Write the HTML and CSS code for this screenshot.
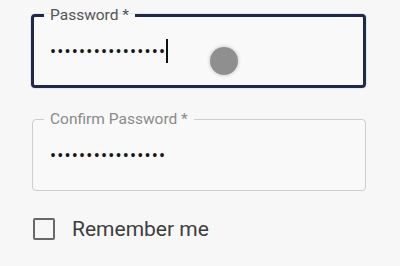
FILE: index.html
```html
<!DOCTYPE html>
<html>
<head>
<meta name="viewport" content="width=device-width, initial-scale=1">
<link rel="stylesheet" href="styles.css">
</head>
<body>
<div id="signupForm">

  <fieldset class="field focused">
    <legend>Password *</legend>
    <div class="value">
      <span class="dots">••••••••••••••••</span><span class="caret"></span>
    </div>
    <span class="touch"></span>
  </fieldset>

  <fieldset class="field">
    <legend>Confirm Password *</legend>
    <div class="value">
      <span class="dots">••••••••••••••••</span>
    </div>
  </fieldset>

  <label class="remember">
    <span class="checkbox"></span>
    <span class="remember-text">Remember me</span>
  </label>

</div>
</body>
</html>
```

FILE: styles.css
```css
body {
  margin: 0;
  background-color: #f7f7f7;
  font-family: Roboto, "Noto Sans", sans-serif;
}

#signupForm {
  padding: 7px 34px 0 31px;
}

/* Outlined text field */
.field {
  position: relative;
  margin: 0;
  padding: 16px 0 23px 11px;
  border: 1px solid #cdcdcd;
  border-radius: 4px;
  background-color: #f9f9f9;
}

.field legend {
  padding: 0 6px;
  font-size: 15.5px;
  line-height: 16px;
  color: #8a8a8a;
}

.field .value {
  display: flex;
  align-items: center;
  height: 24px;
  padding-left: 6px;
}

.dots {
  font-size: 18px;
  letter-spacing: 1.2px;
  color: #1a1a1a;
}

.caret {
  width: 1.5px;
  height: 24px;
  background-color: #111;
}

/* Focused state */
.focused {
  padding: 16px 0 22px 10px;
  border: 3px solid #1f2b46;
  box-shadow: 0 0 0 1px #dfe8f5;
}

.focused legend {
  color: #555;
}

.field + .field {
  margin: 23px 0 0 1px;
}

/* Touch indicator */
.touch {
  position: absolute;
  left: 176px;
  top: 24px;
  width: 28px;
  height: 28px;
  border-radius: 50%;
  background-color: #8f8f8f;
  box-shadow: 0 0 2px 2px #e4e4e4;
}

/* Checkbox row */
.remember {
  display: flex;
  align-items: center;
  margin: 26px 0 0 2px;
}

.checkbox {
  box-sizing: border-box;
  width: 22px;
  height: 22px;
  border: 2.5px solid #686868;
  border-radius: 2px;
}

.remember-text {
  margin-left: 17px;
  font-size: 21px;
  color: #3e3e3e;
}
```
